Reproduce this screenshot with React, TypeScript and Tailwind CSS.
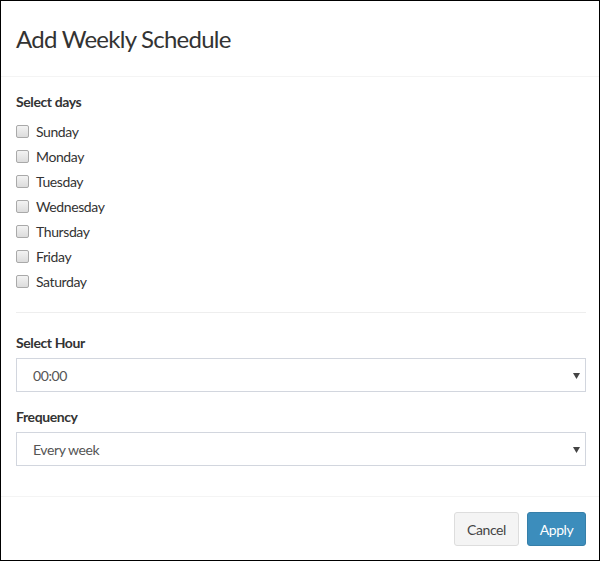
import React, { useState } from 'react'

const days = ['Sunday', 'Monday', 'Tuesday', 'Wednesday', 'Thursday', 'Friday', 'Saturday']

const Caret = () => (
  <svg width="7" height="6" viewBox="0 0 7 6" className="absolute right-[6px] top-[15px]">
    <path d="M0 0H7L3.5 6Z" fill="#444" />
  </svg>
)

const App = () => {
  const [checked, setChecked] = useState<string[]>([])
  const [hour, setHour] = useState('00:00')
  const [freq, setFreq] = useState('Every week')

  const toggle = (d: string) =>
    setChecked(checked.includes(d) ? checked.filter((x) => x !== d) : [...checked, d])

  return (
    <div
      className="w-[600px] h-[561px] border border-black bg-white text-[#333] flex flex-col tracking-[-0.4px]"
      style={{ fontFamily: 'Lato, "Noto Sans", sans-serif' }}
    >
      <div className="h-[76px] border-b border-[#f4f4f4] pl-[15px] flex items-center">
        <h4 className="text-[24px] leading-none text-[#333] tracking-[-0.75px]">Add Weekly Schedule</h4>
      </div>

      <div className="pl-[15px] pr-[13px] pt-[15px] pb-[30px]">
        <div className="text-[14px] leading-[20px] font-bold mb-[7px]">Select days</div>
        <div className="flex flex-col">
          {days.map((d) => (
            <label key={d} className="h-[25px] flex items-center gap-[7px] cursor-pointer text-[14px]">
              <span
                onClick={() => toggle(d)}
                className={`w-[13px] h-[13px] rounded-[2px] border border-[#a9a9a9] ${
                  checked.includes(d) ? 'bg-[#3c8dbc]' : 'bg-gradient-to-b from-[#f3f3f3] to-[#dcdcdc]'
                }`}
              />
              <span className="text-[#333]">{d}</span>
            </label>
          ))}
        </div>

        <div className="mt-[18px] border-t border-[#eeeeee]" />

        <div className="mt-[20px] text-[14px] leading-[20px] font-bold mb-[5px]">Select Hour</div>
        <div className="relative">
          <div
            onClick={() => setHour(hour)}
            className="h-[34px] border border-[#d2d6de] pl-[16px] flex items-center text-[14px] text-[#555]"
          >
            {hour}
          </div>
          <Caret />
        </div>

        <div className="mt-[15px] text-[14px] leading-[20px] font-bold mb-[5px]">Frequency</div>
        <div className="relative">
          <div
            onClick={() => setFreq(freq)}
            className="h-[34px] border border-[#d2d6de] pl-[16px] flex items-center text-[14px] text-[#555]"
          >
            {freq}
          </div>
          <Caret />
        </div>
      </div>

      <div className="border-t border-[#f4f4f4] pt-[15px] pr-[13px] flex justify-end gap-[8px]">
        <button className="h-[34px] w-[65px] rounded-[3px] border border-[#ddd] bg-[#f4f4f4] text-[14px] text-[#444]">
          Cancel
        </button>
        <button className="h-[34px] w-[59px] rounded-[3px] border border-[#367fa9] bg-[#3c8dbc] text-[14px] text-white">
          Apply
        </button>
      </div>
    </div>
  )
}

export default App
